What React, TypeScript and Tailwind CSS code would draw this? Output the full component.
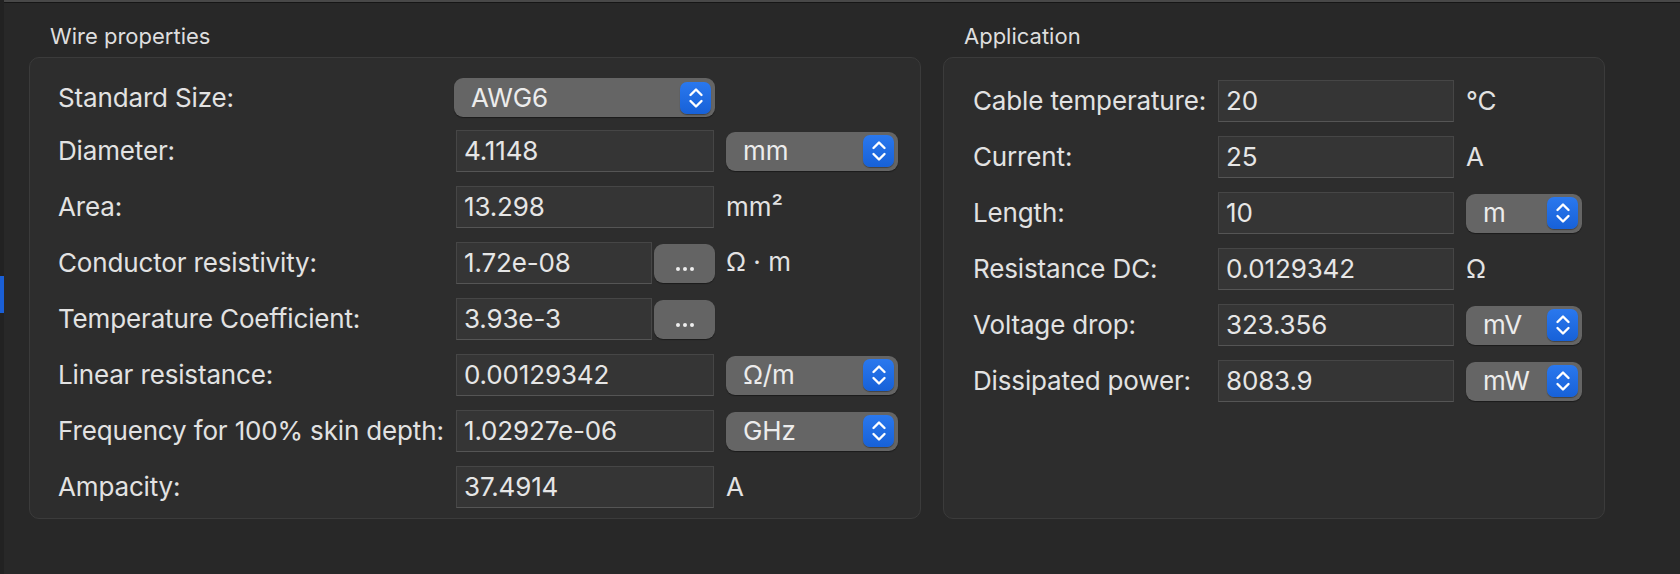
import React from 'react';

const font = { fontFamily: 'Inter, "Noto Sans", sans-serif' };

function Stepper() {
  return (
    <div className="flex h-[32px] w-[31px] shrink-0 items-center justify-center rounded-[7px] bg-gradient-to-b from-[#2a78ee] to-[#1761d8] shadow-[0_1px_1px_rgba(0,0,0,0.35)]">
      <svg width="18" height="24" viewBox="0 0 18 24" fill="none" stroke="white" strokeWidth="2.4" strokeLinecap="round" strokeLinejoin="round">
        <path d="M3.5 9 L9 3.5 L14.5 9" />
        <path d="M3.5 15 L9 20.5 L14.5 15" />
      </svg>
    </div>
  );
}

function Popup({ value, width }: { value: string; width: string }) {
  return (
    <div className={`flex h-[39px] items-center justify-between rounded-[9px] bg-[#656565] pl-[17px] pr-[4px] shadow-[0_1px_1px_rgba(0,0,0,0.4)] ${width}`}>
      <span className="text-[26px] leading-none tracking-[-0.15px] text-[#ececec]">{value}</span>
      <Stepper />
    </div>
  );
}

function Field({ value, width }: { value: string; width: string }) {
  return (
    <div className={`flex h-[42px] shrink-0 items-center border border-[#464646] border-b-[#555555] bg-[#353535] pl-[7px] ${width}`}>
      <span className="text-[26px] leading-none tracking-[-0.15px] text-[#e6e6e6]">{value}</span>
    </div>
  );
}

function DotsButton() {
  return (
    <div className="ml-[2px] flex h-[39px] w-[61px] shrink-0 items-end justify-center rounded-[9px] bg-[#646464] pb-[12px] shadow-[0_1px_1px_rgba(0,0,0,0.4)]">
      <div className="flex gap-[3px]">
        <div className="h-[4px] w-[4px] rounded-full bg-[#eeeeee]" />
        <div className="h-[4px] w-[4px] rounded-full bg-[#eeeeee]" />
        <div className="h-[4px] w-[4px] rounded-full bg-[#eeeeee]" />
      </div>
    </div>
  );
}

function Label({ text, width }: { text: string; width: string }) {
  return <div className={`shrink-0 text-[26px] leading-none tracking-[-0.15px] text-[#e2e2e2] ${width}`}>{text}</div>;
}

function Unit({ text }: { text: string }) {
  return <span className="text-[26px] leading-none text-[#e2e2e2]">{text}</span>;
}

export default function App() {
  const leftLabel = 'w-[396px]';
  const rightLabel = 'w-[245px]';

  return (
    <div style={font} className="flex h-[574px] w-full overflow-hidden bg-[#282828]">
      {/* sidebar edge */}
      <div className="flex w-[4px] shrink-0 flex-col bg-[#222222]">
        <div className="h-[276px]" />
        <div className="h-[37px] bg-[#1a5fd6]" />
      </div>

      <div className="flex flex-1 flex-col">
        <div className="h-[2px] bg-[#484848]" />
        <div className="h-[1px] bg-[#161616]" />

        <div className="flex gap-[22px] pl-[25px] pt-[20px]">
          {/* Wire properties */}
          <div className="flex flex-col">
            <div className="mb-[8px] pl-[21px] text-[22px] leading-[26px] text-[#dedede]">Wire properties</div>
            <div className="flex h-[462px] w-[892px] flex-col gap-[14px] rounded-[10px] border border-[#3b3b3b] bg-[#2d2d2d] pl-[28px] pt-[20px]">
              <div className="flex h-[39px] items-center">
                <Label text="Standard Size:" width={leftLabel} />
                <Popup value="AWG6" width="w-[261px]" />
              </div>
              <div className="-mt-[1px] flex h-[42px] items-center">
                <Label text="Diameter:" width={leftLabel} />
                <div className="ml-[2px] flex items-center gap-[12px]">
                  <Field value="4.1148" width="w-[258px]" />
                  <Popup value="mm" width="w-[172px]" />
                </div>
              </div>
              <div className="flex h-[42px] items-center">
                <Label text="Area:" width={leftLabel} />
                <div className="ml-[2px] flex items-center gap-[12px]">
                  <Field value="13.298" width="w-[258px]" />
                  <Unit text="mm²" />
                </div>
              </div>
              <div className="flex h-[42px] items-center">
                <Label text="Conductor resistivity:" width={leftLabel} />
                <div className="ml-[2px] flex items-center">
                  <Field value="1.72e-08" width="w-[196px]" />
                  <DotsButton />
                  <span className="ml-[11px]">
                    <Unit text="Ω · m" />
                  </span>
                </div>
              </div>
              <div className="flex h-[42px] items-center">
                <Label text="Temperature Coefficient:" width={leftLabel} />
                <div className="ml-[2px] flex items-center">
                  <Field value="3.93e-3" width="w-[196px]" />
                  <DotsButton />
                </div>
              </div>
              <div className="flex h-[42px] items-center">
                <Label text="Linear resistance:" width={leftLabel} />
                <div className="ml-[2px] flex items-center gap-[12px]">
                  <Field value="0.00129342" width="w-[258px]" />
                  <Popup value="Ω/m" width="w-[172px]" />
                </div>
              </div>
              <div className="flex h-[42px] items-center">
                <Label text="Frequency for 100% skin depth:" width={leftLabel} />
                <div className="ml-[2px] flex items-center gap-[12px]">
                  <Field value="1.02927e-06" width="w-[258px]" />
                  <Popup value="GHz" width="w-[172px]" />
                </div>
              </div>
              <div className="flex h-[42px] items-center">
                <Label text="Ampacity:" width={leftLabel} />
                <div className="ml-[2px] flex items-center gap-[12px]">
                  <Field value="37.4914" width="w-[258px]" />
                  <Unit text="A" />
                </div>
              </div>
            </div>
          </div>

          {/* Application */}
          <div className="flex flex-col">
            <div className="mb-[8px] pl-[21px] text-[22px] leading-[26px] text-[#dedede]">Application</div>
            <div className="flex h-[462px] w-[662px] flex-col gap-[14px] rounded-[10px] border border-[#3b3b3b] bg-[#2d2d2d] pl-[29px] pt-[22px]">
              <div className="flex h-[42px] items-center">
                <Label text="Cable temperature:" width={rightLabel} />
                <div className="flex items-center gap-[12px]">
                  <Field value="20" width="w-[236px]" />
                  <Unit text="°C" />
                </div>
              </div>
              <div className="flex h-[42px] items-center">
                <Label text="Current:" width={rightLabel} />
                <div className="flex items-center gap-[12px]">
                  <Field value="25" width="w-[236px]" />
                  <Unit text="A" />
                </div>
              </div>
              <div className="flex h-[42px] items-center">
                <Label text="Length:" width={rightLabel} />
                <div className="flex items-center gap-[12px]">
                  <Field value="10" width="w-[236px]" />
                  <Popup value="m" width="w-[116px]" />
                </div>
              </div>
              <div className="flex h-[42px] items-center">
                <Label text="Resistance DC:" width={rightLabel} />
                <div className="flex items-center gap-[12px]">
                  <Field value="0.0129342" width="w-[236px]" />
                  <Unit text="Ω" />
                </div>
              </div>
              <div className="flex h-[42px] items-center">
                <Label text="Voltage drop:" width={rightLabel} />
                <div className="flex items-center gap-[12px]">
                  <Field value="323.356" width="w-[236px]" />
                  <Popup value="mV" width="w-[116px]" />
                </div>
              </div>
              <div className="flex h-[42px] items-center">
                <Label text="Dissipated power:" width={rightLabel} />
                <div className="flex items-center gap-[12px]">
                  <Field value="8083.9" width="w-[236px]" />
                  <Popup value="mW" width="w-[116px]" />
                </div>
              </div>
            </div>
          </div>
        </div>
      </div>
    </div>
  );
}
